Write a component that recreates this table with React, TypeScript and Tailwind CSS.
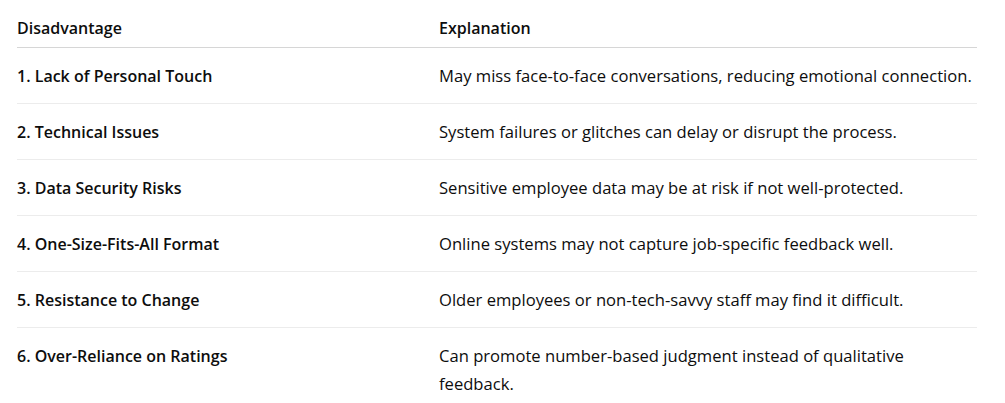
import React from 'react'

const rows = [
  ['1. Lack of Personal Touch', 'May miss face-to-face conversations, reducing emotional connection.'],
  ['2. Technical Issues', 'System failures or glitches can delay or disrupt the process.'],
  ['3. Data Security Risks', 'Sensitive employee data may be at risk if not well-protected.'],
  ['4. One-Size-Fits-All Format', 'Online systems may not capture job-specific feedback well.'],
  ['5. Resistance to Change', 'Older employees or non-tech-savvy staff may find it difficult.'],
]

export default function App() {
  return (
    <div className="min-h-[403px] bg-white font-['Open_Sans',sans-serif] text-[16px] text-[#0d0d0d]">
      <div className="ml-[17px] w-[960px]">
        {/* header */}
        <div className="grid grid-cols-[422px_1fr] border-b border-[#d6d6d6] pt-[14px] pb-[5px] font-semibold leading-7">
          <div>Disadvantage</div>
          <div>Explanation</div>
        </div>

        {rows.map(([d, e]) => (
          <div
            key={d}
            className="grid grid-cols-[422px_1fr] border-b border-[#ececec] pt-[14px] pb-[13px] leading-7"
          >
            <div className="font-semibold">{d}</div>
            <div className="text-[16.6px]">{e}</div>
          </div>
        ))}

        <div className="grid grid-cols-[422px_1fr] pt-[14px] pb-[4px] leading-7">
          <div className="font-semibold">6. Over-Reliance on Ratings</div>
          <div className="text-[16.6px]">
            Can promote number-based judgment instead of qualitative
            <br />
            feedback.
          </div>
        </div>
      </div>
    </div>
  )
}
